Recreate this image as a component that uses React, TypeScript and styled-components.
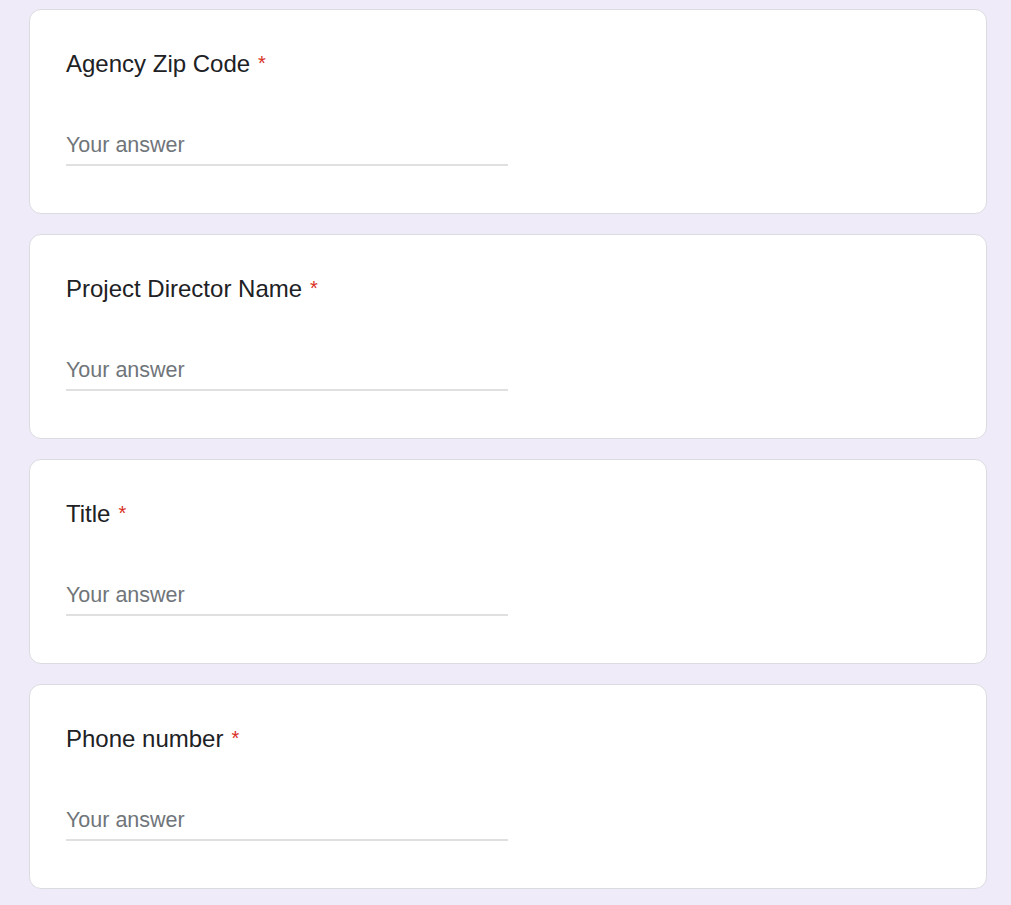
import React from 'react';
import styled, { createGlobalStyle } from 'styled-components';

const GlobalStyle = createGlobalStyle`
  body {
    margin: 0;
    background: #f0ebf8;
    font-family: "Liberation Sans", Arial, sans-serif;
  }
`;

const questions = [
  'Agency Zip Code',
  'Project Director Name',
  'Title',
  'Phone number',
];

const Page = styled.div`
  display: flex;
  flex-direction: column;
  gap: 20px;
  padding: 9px 0 16px 29px;
`;

const Card = styled.div`
  box-sizing: border-box;
  width: 958px;
  height: 205px;
  background: #fff;
  border: 1px solid #dadce0;
  border-radius: 12px;
  padding: 35px 36px 0 36px;
`;

const Title = styled.div`
  font-size: 24px;
  line-height: 36px;
  color: #202124;
`;

const Required = styled.span`
  color: #d93025;
  font-size: 20px;
  margin-left: 8px;
  vertical-align: 2px;
`;

const Answer = styled.input`
  display: block;
  box-sizing: border-box;
  width: 442px;
  margin-top: 48px;
  padding: 0 0 4px 0;
  border: none;
  border-bottom: 2px solid #e0e0e0;
  outline: none;
  background: transparent;
  font-family: "Liberation Sans", Arial, sans-serif;
  font-size: 21.5px;
  line-height: 30px;
  color: #202124;

  &::placeholder {
    color: #70757a;
  }
`;

export default function App() {
  return (
    <>
      <GlobalStyle />
      <Page>
        {questions.map((q) => (
          <Card key={q}>
            <Title>
              {q}
              <Required>*</Required>
            </Title>
            <Answer placeholder="Your answer" />
          </Card>
        ))}
      </Page>
    </>
  );
}
